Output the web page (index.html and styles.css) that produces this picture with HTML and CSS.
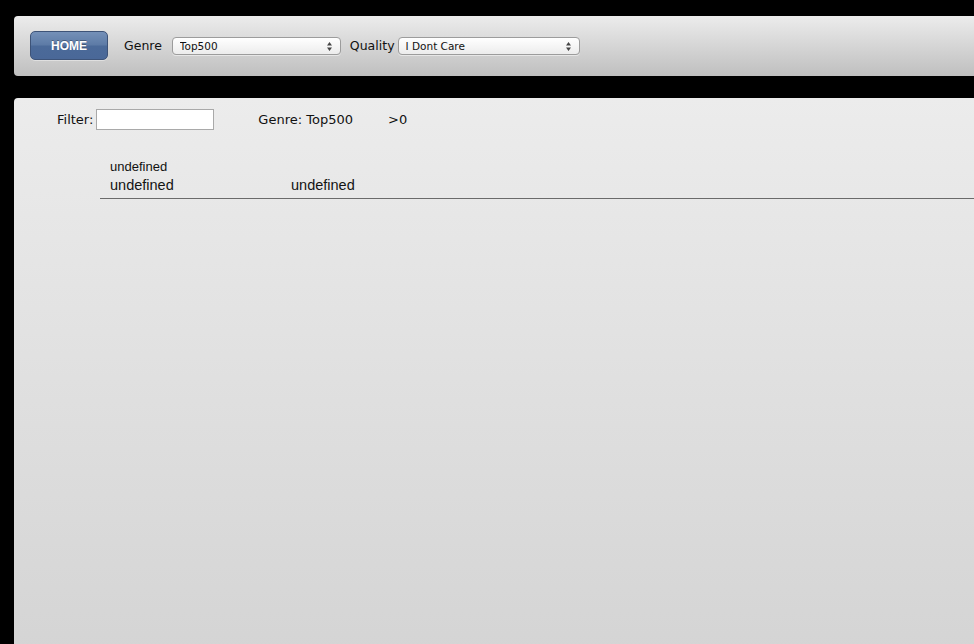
FILE: index.html
```html
<!DOCTYPE html>
<html>
<head>
<meta charset="utf-8">
<link rel="stylesheet" href="styles.css">
</head>
<body>
<div class="topbar">
  <button class="home">HOME</button>
  <label class="lbl">Genre</label>
  <div class="sel sel-genre">
    <select><option>Top500</option></select>
    <svg class="arr" width="5" height="9" viewBox="0 0 5 9"><path d="M0 3.5 L2.5 0 L5 3.5Z M0 5.5 L2.5 9 L5 5.5Z" fill="#444"/></svg>
  </div>
  <label class="lbl lbl-q">Quality</label>
  <div class="sel sel-quality">
    <select><option>I Dont Care</option></select>
    <svg class="arr" width="5" height="9" viewBox="0 0 5 9"><path d="M0 3.5 L2.5 0 L5 3.5Z M0 5.5 L2.5 9 L5 5.5Z" fill="#444"/></svg>
  </div>
</div>
<div class="main">
  <div class="filterrow">
    <label class="flbl">Filter:</label>
    <input class="finput" type="text">
    <span class="ginfo">Genre: Top500</span>
    <span class="cnt">&gt;0</span>
  </div>
  <div class="table">
    <div class="row r1"><span>undefined</span></div>
    <div class="row r2"><span class="c1">undefined</span><span class="c2">undefined</span></div>
  </div>
</div>
</body>
</html>
```
FILE: styles.css
```css
html, body {
  margin: 0;
  padding: 0;
  background: #000;
  height: 100%;
  overflow: hidden;
}
body {
  font-family: "DejaVu Sans", "Liberation Sans", sans-serif;
  color: #111;
}
.topbar {
  margin: 16px 0 0 14px;
  height: 60px;
  box-sizing: border-box;
  padding: 15px 0 0 16px;
  background: linear-gradient(#ececec, #bfbfbf);
  border-radius: 4px 0 0 4px;
  display: flex;
  align-items: flex-start;
}
.home {
  width: 78px;
  height: 29px;
  border: 1px solid #3d5378;
  border-radius: 5px;
  background: linear-gradient(#7490b8 0%, #5d7ba6 48%, #4b6a99 52%, #4a6898 100%);
  color: #fff;
  font-family: "Liberation Sans", Arial, sans-serif;
  font-weight: bold;
  font-size: 12px;
  padding: 0;
  margin: 0;
  text-shadow: 0 -1px 0 rgba(0,0,0,0.3);
  box-shadow: 0 1px 0 rgba(255,255,255,0.4);
}
.lbl {
  font-size: 12.5px;
  margin-left: 16px;
  line-height: 30px;
  color: #111;
}
.lbl-q {
  margin-left: 9px;
}
.sel {
  position: relative;
  margin-top: 6px;
  margin-left: 10px;
  height: 18px;
}
.sel-quality { margin-left: 3px; }
.sel select {
  appearance: none;
  -webkit-appearance: none;
  height: 18px;
  box-sizing: border-box;
  border: 1px solid #9c9c9c;
  border-radius: 4px;
  background: linear-gradient(#ffffff, #ececec);
  font-family: "DejaVu Sans", sans-serif;
  font-size: 10.5px;
  color: #111;
  padding: 0 0 0 7px;
  margin: 0;
  display: block;
  box-shadow: 0 1px 0 rgba(255,255,255,0.5);
}
.sel-genre select { width: 169px; }
.sel-quality select { width: 182px; }
.arr {
  position: absolute;
  right: 9px;
  top: 4.5px;
  pointer-events: none;
}
.main {
  margin: 22px 0 0 14px;
  height: 560px;
  background: linear-gradient(#ececec, #d4d4d4);
  border-radius: 4px 0 0 0;
  padding-top: 11px;
  box-sizing: border-box;
}
.filterrow {
  display: flex;
  align-items: center;
  height: 21px;
  padding-left: 43px;
  font-size: 13px;
}
.flbl { margin-right: 3px; }
.finput {
  width: 118px;
  height: 21px;
  box-sizing: border-box;
  border: 1px solid #a9a9a9;
  background: #fff;
  margin: 0;
  padding: 0;
  outline: none;
}
.ginfo { margin-left: 44px; }
.cnt { margin-left: 35px; }
.table {
  margin: 29px 0 0 86px;
  border-bottom: 1px solid #6a6a6a;
  font-family: "Liberation Sans", Arial, sans-serif;
  padding-bottom: 2px;
}
.row {
  padding-left: 10px;
  display: flex;
}
.r1 { font-size: 13px; line-height: 16px; }
.r2 { font-size: 14.5px; line-height: 21px; color: #141414; }
.c1 { width: 181px; }
```
